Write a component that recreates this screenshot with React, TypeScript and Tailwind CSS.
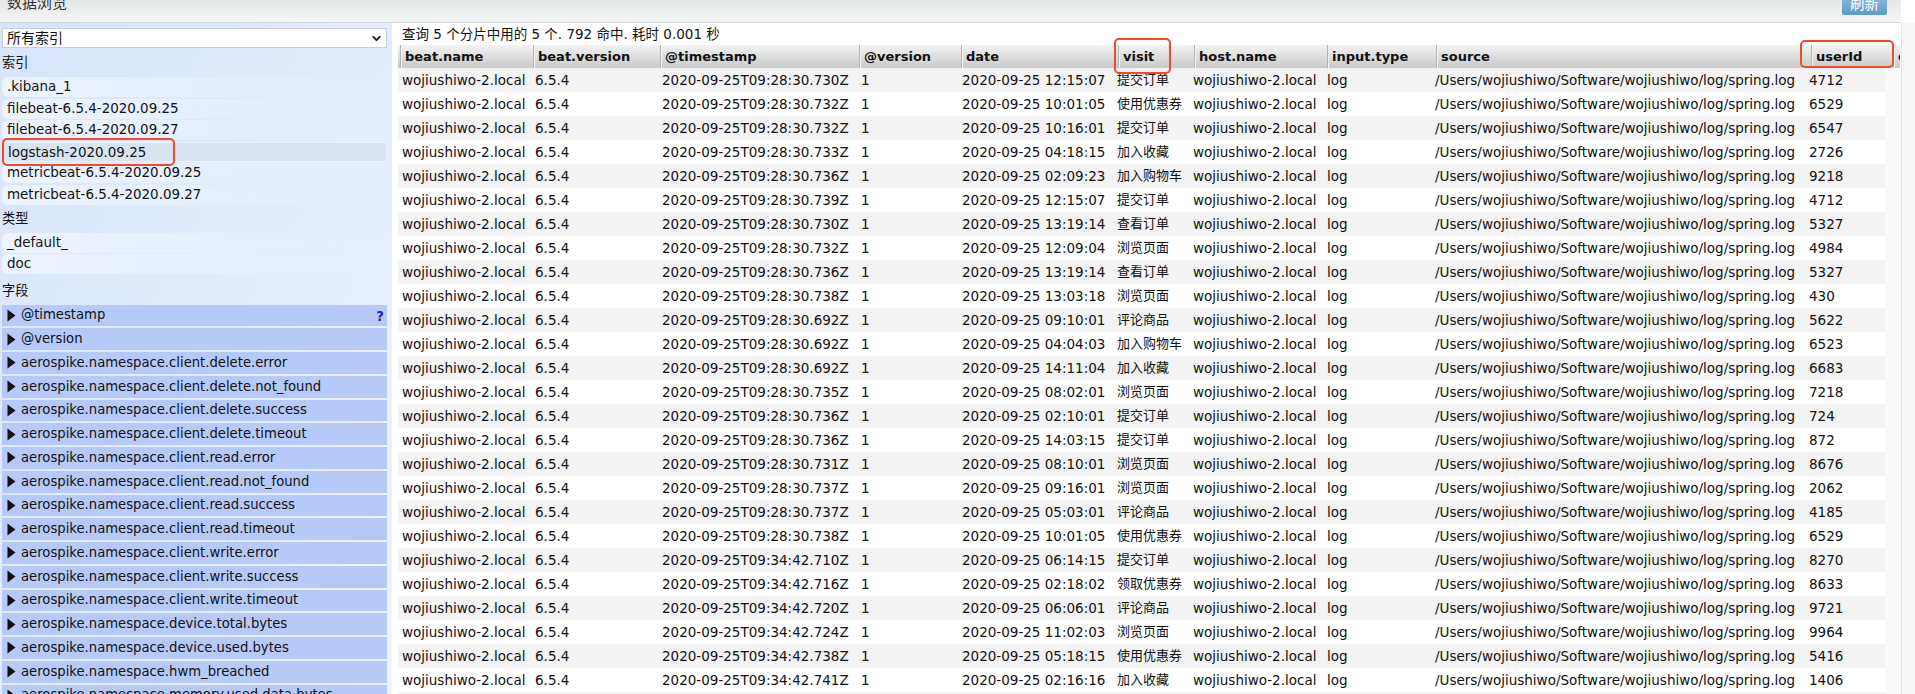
import { ChevronDown } from "lucide-react";

const INDICES = [
  ".kibana_1",
  "filebeat-6.5.4-2020.09.25",
  "filebeat-6.5.4-2020.09.27",
  "logstash-2020.09.25",
  "metricbeat-6.5.4-2020.09.25",
  "metricbeat-6.5.4-2020.09.27",
];

const FIELDS = [
  "@timestamp",
  "@version",
  "aerospike.namespace.client.delete.error",
  "aerospike.namespace.client.delete.not_found",
  "aerospike.namespace.client.delete.success",
  "aerospike.namespace.client.delete.timeout",
  "aerospike.namespace.client.read.error",
  "aerospike.namespace.client.read.not_found",
  "aerospike.namespace.client.read.success",
  "aerospike.namespace.client.read.timeout",
  "aerospike.namespace.client.write.error",
  "aerospike.namespace.client.write.success",
  "aerospike.namespace.client.write.timeout",
  "aerospike.namespace.device.total.bytes",
  "aerospike.namespace.device.used.bytes",
  "aerospike.namespace.hwm_breached",
  "aerospike.namespace.memory.used.data.bytes",
];

const COLUMNS: { name: string; width: string }[] = [
  { name: "beat.name", width: "w-[133px]" },
  { name: "beat.version", width: "w-[127px]" },
  { name: "@timestamp", width: "w-[199px]" },
  { name: "@version", width: "w-[102px]" },
  { name: "date", width: "w-[157px]" },
  { name: "visit", width: "w-[76px]" },
  { name: "host.name", width: "w-[133px]" },
  { name: "input.type", width: "w-[109px]" },
  { name: "source", width: "w-[375px]" },
  { name: "userId", width: "w-[82px]" },
  { name: "c", width: "w-[7px]" },
];

const ROWS: [string, string, string, string][] = [
  ["28:30.730Z", "12:15:07", "提交订单", "4712"],
  ["28:30.732Z", "10:01:05", "使用优惠券", "6529"],
  ["28:30.732Z", "10:16:01", "提交订单", "6547"],
  ["28:30.733Z", "04:18:15", "加入收藏", "2726"],
  ["28:30.736Z", "02:09:23", "加入购物车", "9218"],
  ["28:30.739Z", "12:15:07", "提交订单", "4712"],
  ["28:30.730Z", "13:19:14", "查看订单", "5327"],
  ["28:30.732Z", "12:09:04", "浏览页面", "4984"],
  ["28:30.736Z", "13:19:14", "查看订单", "5327"],
  ["28:30.738Z", "13:03:18", "浏览页面", "430"],
  ["28:30.692Z", "09:10:01", "评论商品", "5622"],
  ["28:30.692Z", "04:04:03", "加入购物车", "6523"],
  ["28:30.692Z", "14:11:04", "加入收藏", "6683"],
  ["28:30.735Z", "08:02:01", "浏览页面", "7218"],
  ["28:30.736Z", "02:10:01", "提交订单", "724"],
  ["28:30.736Z", "14:03:15", "提交订单", "872"],
  ["28:30.731Z", "08:10:01", "浏览页面", "8676"],
  ["28:30.737Z", "09:16:01", "浏览页面", "2062"],
  ["28:30.737Z", "05:03:01", "评论商品", "4185"],
  ["28:30.738Z", "10:01:05", "使用优惠券", "6529"],
  ["34:42.710Z", "06:14:15", "提交订单", "8270"],
  ["34:42.716Z", "02:18:02", "领取优惠券", "8633"],
  ["34:42.720Z", "06:06:01", "评论商品", "9721"],
  ["34:42.724Z", "11:02:03", "浏览页面", "9964"],
  ["34:42.738Z", "05:18:15", "使用优惠券", "5416"],
  ["34:42.741Z", "02:16:16", "加入收藏", "1406"],
];

const SOURCE = "/Users/wojiushiwo/Software/wojiushiwo/log/spring.log";
const cell = "p-0 pl-[4px] whitespace-nowrap overflow-hidden font-normal text-left";

function Callout({ className }: { className: string }) {
  return <div className={`absolute border-2 border-[#f2482c] rounded-[5px] pointer-events-none ${className}`} />;
}

export default function App() {
  return (
    <div className="relative h-[694px] overflow-hidden bg-white text-[13px] text-[#111] font-['DejaVu_Sans','Noto_Sans_CJK_SC',sans-serif]">
      {/* Top bar */}
      <div className="flex items-end justify-between h-[23px] pl-[7px] pr-[14px] bg-gradient-to-b from-[#e6e8e8] to-[#f4f5f5] border-b border-[#d3d6da] overflow-hidden mr-[14px]">
        <span className="text-[15px] leading-[16px] mb-[11px] text-[#333]">数据浏览</span>
        <span className="w-[45px] h-[20px] mb-[7px] flex items-center justify-center rounded-[2px] bg-gradient-to-b from-[#8dbbe2] to-[#5c9aca] text-white text-[14.5px]">刷新</span>
      </div>

      <div className="flex h-[671px]">
        {/* Sidebar */}
        <aside className="w-[392px] shrink-0 px-[2px] pt-[5px] overflow-hidden text-[13.2px] bg-gradient-to-br from-[#d7e5fb] to-[#eef4ff]">
          <div className="flex items-center justify-between h-[20px] w-[385px] pl-[4px] pr-[3px] bg-white border border-[#c9cfd8] text-[14px]">
            <span>所有索引</span>
            <ChevronDown size={13} strokeWidth={3.5} className="text-[#222]" />
          </div>

          <h3 className="h-[26px] mt-[3px] leading-[24px] font-normal">索引</h3>
          <ul className="w-[385px] text-[13.45px]">
            {INDICES.map(name => (
              <li
                key={name}
                className={`h-[20px] mb-[1.5px] pl-[5px] leading-[20px] rounded-[6px] ${
                  name === "logstash-2020.09.25"
                    ? "bg-[#d9e3f2] border border-[#eef3fb] pl-[4px] leading-[18px]"
                    : "bg-gradient-to-r from-[#eef4fe] to-transparent"
                }`}
              >
                {name}
              </li>
            ))}
          </ul>

          <h3 className="h-[25px] mt-[3px] leading-[22px] font-normal">类型</h3>
          <ul className="w-[385px] text-[13.45px]">
            {["_default_", "doc"].map(name => (
              <li key={name} className="h-[20px] mb-[1.5px] pl-[5px] leading-[20px] rounded-[6px] bg-gradient-to-r from-[#eef4fe] to-transparent">
                {name}
              </li>
            ))}
          </ul>

          <h3 className="h-[29px] leading-[30px] font-normal">字段</h3>
          <ul className="w-[385px]">
            {FIELDS.map(name => (
              <li key={name} className="relative flex items-center gap-[5px] h-[21.75px] mb-[2px] pl-[5px] bg-[#b5caf9]">
                <svg width="9" height="13" viewBox="0 0 9 13" className="shrink-0">
                  <path d="M0.5 0.5 L8.5 6.5 L0.5 12.5 Z" fill="#111" />
                </svg>
                <span>{name}</span>
                {name === "@timestamp" && (
                  <span className="absolute right-[3px] top-[2px] font-bold text-[#1c1cd0]">?</span>
                )}
              </li>
            ))}
          </ul>
        </aside>

        {/* Results */}
        <main className="flex-1 min-w-0 flex">
          <div className="flex-1 min-w-0 pl-[6px] overflow-hidden">
            <div className="h-[22px] pl-[4px] leading-[23px] text-[13.5px] whitespace-nowrap">
              查询 5 个分片中用的 5 个. 792 命中. 耗时 0.001 秒
            </div>
            <div className="flex h-[23px] pl-[2px] w-[1502px] overflow-hidden bg-gradient-to-b from-[#f3f3f3] to-[#c9c9c9]">
              {COLUMNS.map(col => (
                <div
                  key={col.name}
                  className={`${col.width} shrink-0 pl-[4px] leading-[23px] font-bold whitespace-nowrap overflow-hidden border-l border-l-[#b4b4b4] shadow-[inset_1px_0_0_#f4f4f4]`}
                >
                  {col.name}
                </div>
              ))}
            </div>
            <div className="bg-[#fafafa]">
              <table className="table-fixed w-[1487px] border-collapse text-[13.5px]">
                <colgroup>
                  <col className="w-[133px]" />
                  <col className="w-[127px]" />
                  <col className="w-[199px]" />
                  <col className="w-[101px]" />
                  <col className="w-[155px]" />
                  <col className="w-[76px]" />
                  <col className="w-[134px]" />
                  <col className="w-[108px]" />
                  <col className="w-[374px]" />
                  <col className="w-[80px]" />
                </colgroup>
                <tbody>
                  {ROWS.map((row, i) => (
                    <tr key={i} className={`h-[24px] ${i % 2 === 0 ? "bg-[#f3f3f3]" : "bg-white"}`}>
                      <td className={cell}>wojiushiwo-2.local</td>
                      <td className={cell}>6.5.4</td>
                      <td className={cell}>2020-09-25T09:{row[0]}</td>
                      <td className={cell}>1</td>
                      <td className={cell}>2020-09-25 {row[1]}</td>
                      <td className={`${cell} text-[13px]`}>{row[2]}</td>
                      <td className={cell}>wojiushiwo-2.local</td>
                      <td className={cell}>log</td>
                      <td className={cell}>{SOURCE}</td>
                      <td className={cell}>{row[3]}</td>
                    </tr>
                  ))}
                  <tr className="h-[24px] bg-[#f3f3f3]">
                    <td colSpan={10} />
                  </tr>
                </tbody>
              </table>
            </div>
          </div>
          <div className="w-[14px] shrink-0 border-l border-[#e4e4e4] bg-[#f7f7f7]" />
        </main>
      </div>

      {/* Red annotation boxes */}
      <Callout className="left-[2px] top-[138px] w-[173px] h-[28px]" />
      <Callout className="left-[1114px] top-[38px] w-[57px] h-[36px]" />
      <Callout className="left-[1800px] top-[40px] w-[94px] h-[28px]" />
    </div>
  );
}
